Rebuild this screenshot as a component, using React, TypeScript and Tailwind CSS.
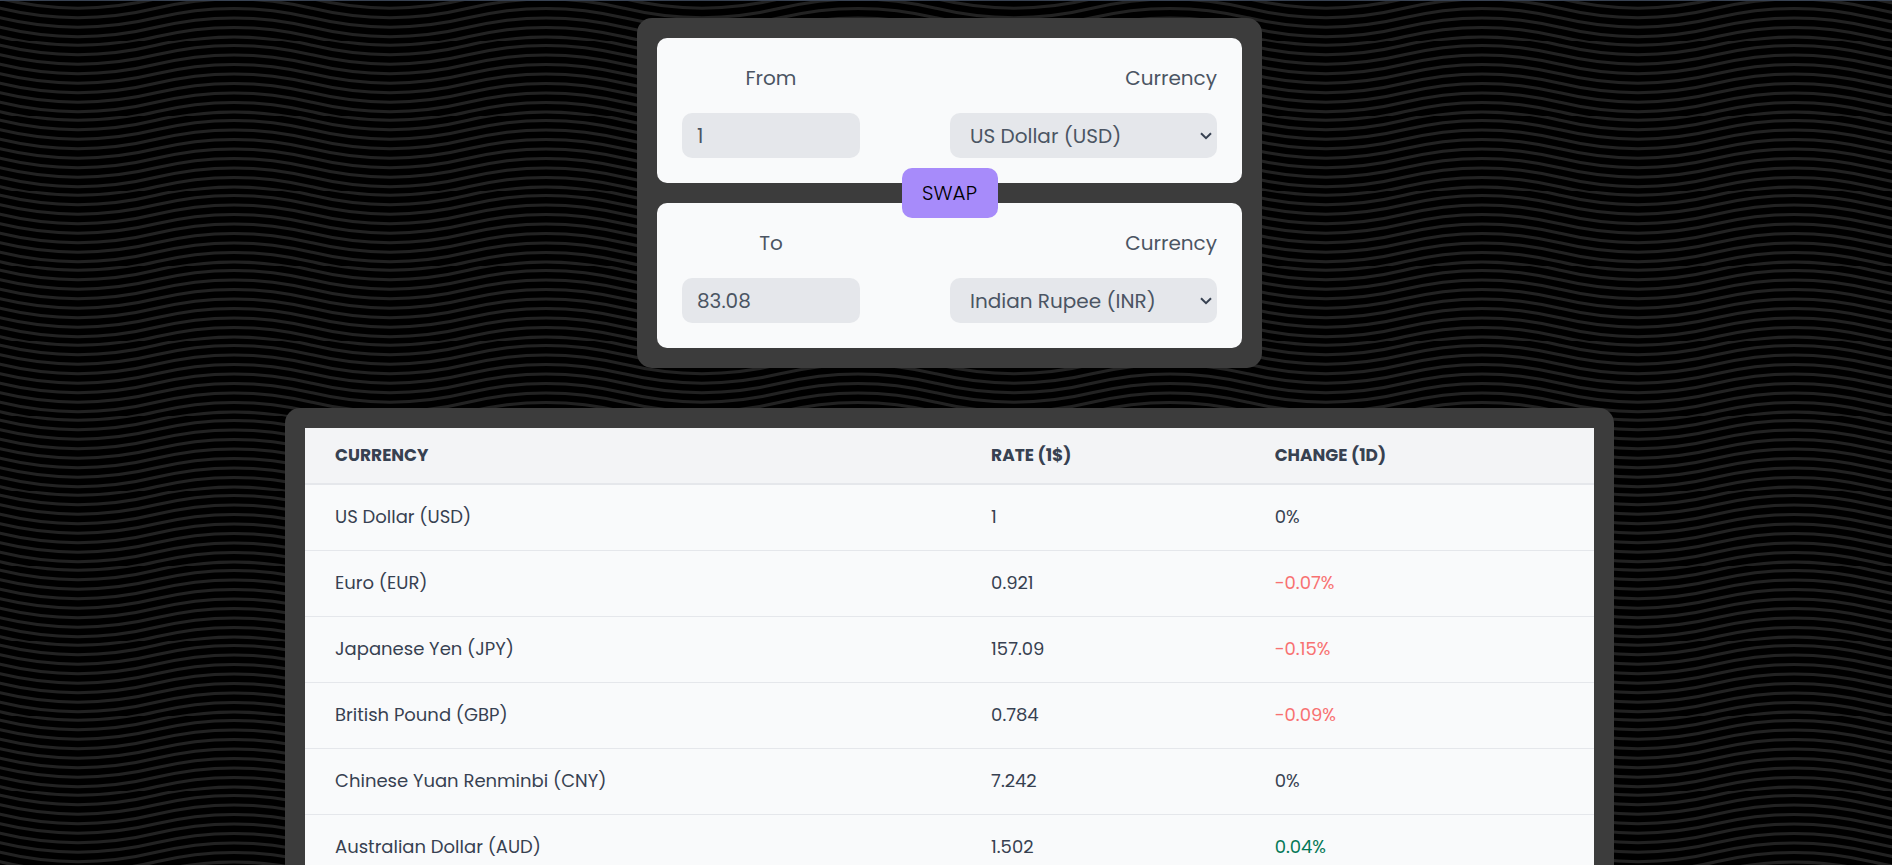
import { useState } from "react";

type Quote = { name: string; rate: number; change: number };

const QUOTES: Quote[] = [
  { name: "US Dollar (USD)", rate: 1, change: 0 },
  { name: "Euro (EUR)", rate: 0.921, change: -0.07 },
  { name: "Japanese Yen (JPY)", rate: 157.09, change: -0.15 },
  { name: "British Pound (GBP)", rate: 0.784, change: -0.09 },
  { name: "Chinese Yuan Renminbi (CNY)", rate: 7.242, change: 0 },
  { name: "Australian Dollar (AUD)", rate: 1.502, change: 0.04 },
];

const OPTIONS = [...QUOTES.map((q) => q.name), "Indian Rupee (INR)"];

const WAVE_ROWS = Array.from({ length: 13 }, (_, i) => i * 9.5 - 24.2);

function Waves() {
  return (
    <svg className="absolute inset-0 -z-10 h-full w-full" aria-hidden="true">
      <defs>
        <pattern id="waves" y="40" width="312" height="75" patternUnits="userSpaceOnUse">
          {WAVE_ROWS.map((y) => (
            <path
              key={y}
              d={`M-2 ${y - 0.5}L0 ${y}Q78 ${y + 18.8} 156 ${y}T312 ${y}l2 .5`}
              fill="none"
              stroke="#222"
              strokeWidth="3"
            />
          ))}
        </pattern>
      </defs>
      <rect width="100%" height="100%" fill="url(#waves)" />
    </svg>
  );
}

type SideProps = {
  id: string;
  label: string;
  amount: string;
  currency: string;
  onAmount: (value: string) => void;
  onCurrency: (value: string) => void;
};

function Side({ id, label, amount, currency, onAmount, onCurrency }: SideProps) {
  return (
    <div className="flex justify-between rounded-[10px] bg-[#f9fafb] p-[25px] text-xl leading-[30px] text-[#4b5563]">
      <div className="flex w-[178px] flex-col gap-5">
        <label htmlFor={`${id}-amount`} className="text-center">
          {label}
        </label>
        <input
          id={`${id}-amount`}
          value={amount}
          onChange={(e) => onAmount(e.target.value)}
          className="h-[45px] w-full rounded-[10px] bg-[#e5e7eb] px-[15px] outline-none"
        />
      </div>
      <div className="flex w-[267px] flex-col gap-5">
        <label htmlFor={`${id}-currency`} className="text-right">
          Currency
        </label>
        <div className="relative">
          <select
            id={`${id}-currency`}
            value={currency}
            onChange={(e) => onCurrency(e.target.value)}
            className="h-[45px] w-full appearance-none rounded-[10px] bg-[#e5e7eb] pr-8 pl-5 outline-none"
          >
            {OPTIONS.map((o) => (
              <option key={o}>{o}</option>
            ))}
          </select>
          <svg
            viewBox="0 0 12 8"
            className="pointer-events-none absolute top-[19px] right-[5px] h-2 w-3"
            fill="none"
            stroke="#374151"
            strokeWidth="2"
            aria-hidden="true"
          >
            <path d="M1 1.2L6 6.2L11 1.2" />
          </svg>
        </div>
      </div>
    </div>
  );
}

function changeColor(change: number) {
  if (change < 0) return "text-[#f87171]";
  if (change > 0) return "text-[#047857]";
  return "";
}

export default function App() {
  const [from, setFrom] = useState({ amount: "1", currency: "US Dollar (USD)" });
  const [to, setTo] = useState({ amount: "83.08", currency: "Indian Rupee (INR)" });

  const swap = () => {
    setFrom(to);
    setTo(from);
  };

  return (
    <main className="relative isolate flex h-screen flex-col items-center gap-10 overflow-hidden border-t border-[#374151] bg-black pt-[17px] pl-[7px] font-['Poppins','Inter',sans-serif]">
      <Waves />
      <section className="relative flex w-[625px] max-w-full shrink-0 flex-col gap-5 rounded-[15px] bg-[#3c3c3c] p-5">
        <Side
          id="from"
          label="From"
          amount={from.amount}
          currency={from.currency}
          onAmount={(amount) => setFrom({ ...from, amount })}
          onCurrency={(currency) => setFrom({ ...from, currency })}
        />
        <button
          type="button"
          onClick={swap}
          className="absolute top-1/2 left-1/2 h-[50px] w-24 -translate-x-1/2 -translate-y-1/2 rounded-[10px] bg-[#a78bfa] text-xl font-light text-black"
        >
          SWAP
        </button>
        <Side
          id="to"
          label="To"
          amount={to.amount}
          currency={to.currency}
          onAmount={(amount) => setTo({ ...to, amount })}
          onCurrency={(currency) => setTo({ ...to, currency })}
        />
      </section>

      <section className="w-[70.5%] shrink-0 rounded-[15px] bg-[#3c3c3c] p-5">
        <table className="w-full table-fixed border-collapse bg-[#f9fafb] text-left text-lg leading-[25px] text-[#374151]">
          <thead>
            <tr className="h-14 border-b-2 border-[#e5e7eb] bg-[#f3f4f6] text-[17px] uppercase">
              <th className="w-[50.9%] px-[30px] font-bold">Currency</th>
              <th className="w-[22%] px-[30px] font-bold">Rate (1$)</th>
              <th className="px-[30px] font-bold">Change (1D)</th>
            </tr>
          </thead>
          <tbody>
            {QUOTES.map((q) => (
              <tr key={q.name} className="h-[66px] border-b border-[#e5e7eb]">
                <td className="px-[30px] pb-0.5">{q.name}</td>
                <td className="px-[30px] pb-0.5">{q.rate}</td>
                <td className={`px-[30px] pb-0.5 ${changeColor(q.change)}`}>{q.change}%</td>
              </tr>
            ))}
          </tbody>
        </table>
      </section>
    </main>
  );
}
